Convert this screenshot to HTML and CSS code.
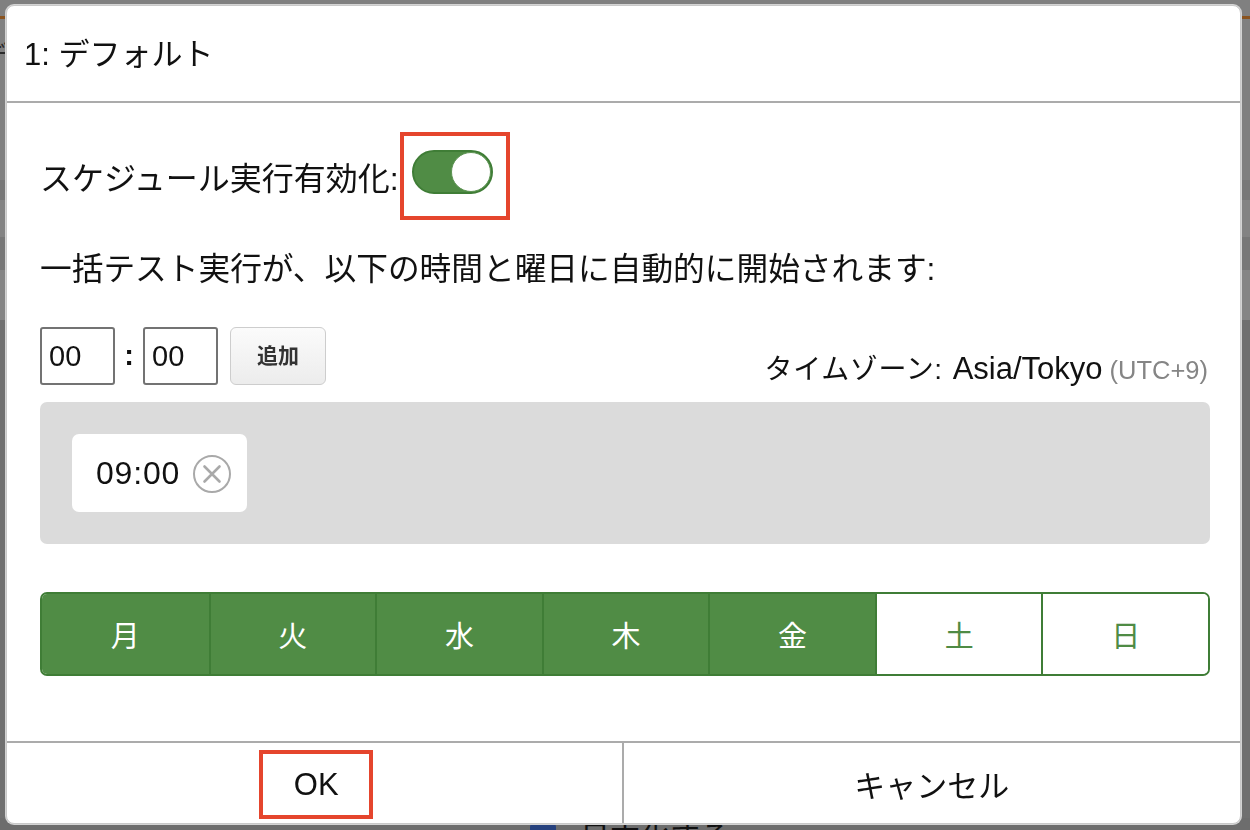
FILE: index.html
```html
<!DOCTYPE html>
<html lang="ja">
<head>
<meta charset="utf-8">
<title>スケジュール</title>
<link rel="stylesheet" href="styles.css">
</head>
<body>
<div class="page">
  <div class="page-top"></div>
  <div class="page-nav"><span class="page-frag">デ</span></div>
  <div class="page-band page-band-a"></div>
  <div class="page-band page-band-b"></div>
  <div class="page-band page-band-c"></div>
  <div class="page-band page-band-d"></div>
  <div class="page-rest"></div>
  <div class="page-footer">
    <span class="page-check"></span>
    <span class="page-label">日本化する</span>
  </div>
</div>

<div class="dialog">
  <div class="dialog-header">1: デフォルト</div>
  <div class="dialog-body">
    <div class="row-enable">
      <span class="label">スケジュール実行有効化:</span>
      <span class="highlight highlight-switch">
        <span class="switch"><span class="knob"></span></span>
      </span>
    </div>
    <div class="desc">一括テスト実行が、以下の時間と曜日に自動的に開始されます:</div>
    <div class="row-time">
      <input class="time-input" type="text" value="00">
      <span class="time-colon">:</span>
      <input class="time-input" type="text" value="00">
      <button class="btn-add" type="button">追加</button>
      <div class="timezone">
        <span class="tz-label">タイムゾーン:</span>
        <span class="tz-name">Asia/Tokyo</span>
        <span class="tz-offset">(UTC+9)</span>
      </div>
    </div>
    <div class="time-list">
      <div class="chip">
        <span class="chip-text">09:00</span>
        <svg class="chip-close" width="40" height="40" viewBox="0 0 40 40">
          <circle cx="20" cy="20" r="18" fill="none" stroke="#a9a9a9" stroke-width="2"/>
          <path d="M12.5 12.5 L27.5 27.5 M27.5 12.5 L12.5 27.5" stroke="#a9a9a9" stroke-width="2.6" stroke-linecap="round"/>
        </svg>
      </div>
    </div>
    <div class="weekdays">
      <div class="day on">月</div>
      <div class="day on">火</div>
      <div class="day on">水</div>
      <div class="day on">木</div>
      <div class="day on">金</div>
      <div class="day">土</div>
      <div class="day">日</div>
    </div>
  </div>
  <div class="dialog-footer">
    <div class="footer-cell footer-left">
      <span class="highlight highlight-ok">OK</span>
    </div>
    <div class="footer-cell">キャンセル</div>
  </div>
</div>
</body>
</html>
```

FILE: styles.css
```css
* { box-sizing: border-box; }

html, body {
  margin: 0;
  padding: 0;
  height: 100%;
}

body {
  font-family: "Liberation Sans", "Noto Sans CJK JP", sans-serif;
  background: #727272;
  color: #111;
  overflow: hidden;
}

/* background page (already dimmed) */
.page {
  height: 100vh;
  display: flex;
  flex-direction: column;
}
.page-top {
  height: 19px;
  background: #808080;
  border-bottom: 3px solid #8a531f;
  flex: none;
}
.page-nav {
  height: 161px;
  background: #808080;
  flex: none;
  overflow: hidden;
}
.page-frag {
  display: block;
  margin: 22px 0 0 -18px;
  font-size: 26px;
  line-height: 30px;
  color: #2a2a2a;
}
.page-band { flex: none; }
.page-band-a { height: 20px; background: #777; }
.page-band-b { height: 37px; background: #838383; }
.page-band-c { height: 33px; background: #777; }
.page-band-d { height: 50px; background: #858585; }
.page-rest { flex: 1; background: #707070; }
.page-footer {
  height: 12px;
  background: #6d6d6d;
  display: flex;
  align-items: flex-start;
  padding-left: 530px;
  gap: 24px;
  flex: none;
  overflow: hidden;
}
.page-check {
  width: 26px;
  height: 26px;
  margin-top: 3px;
  border-radius: 6px;
  background: #26417e;
}
.page-label {
  font-size: 30px;
  line-height: 30px;
  margin-top: 4px;
  color: #111;
}

/* dialog overlay */
.dialog {
  position: fixed;
  left: 6px;
  top: 5px;
  right: 9px;
  bottom: 6px;
  background: #fff;
  border: 1px solid #c9c9c9;
  box-shadow: 0 0 0 1px #d4d4d4;
  border-radius: 8px;
  display: flex;
  flex-direction: column;
  overflow: hidden;
}

.dialog-header {
  height: 97px;
  flex: none;
  border-bottom: 2px solid #ababab;
  padding-left: 17px;
  display: flex;
  align-items: center;
  font-size: 31px;
  padding-bottom: 4px;
}

.dialog-body {
  flex: 1;
  padding: 29px 30px 0 33px;
  display: flex;
  flex-direction: column;
}

.row-enable {
  display: flex;
  align-items: center;
  height: 88px;
}
.label {
  font-size: 32px;
}

.highlight {
  display: inline-block;
  border: 4px solid #e5452d;
}
.highlight-switch {
  width: 110px;
  height: 88px;
  margin-left: 1px;
  padding: 14px 0 0 8px;
}

.switch {
  display: block;
  position: relative;
  width: 81px;
  height: 44px;
  border-radius: 22px;
  background: #508c45;
  border: 2px solid #3f7d36;
}
.knob {
  position: absolute;
  right: 0;
  top: 0;
  width: 40px;
  height: 40px;
  border-radius: 50%;
  background: #fff;
  border: 1px solid #5c9352;
}

.desc {
  margin-top: 27px;
  font-size: 31.7px;
  line-height: 44px;
}

.row-time {
  margin-top: 36px;
  display: flex;
  align-items: center;
  height: 58px;
}
.time-input {
  width: 75px;
  height: 58px;
  border: 2px solid #737373;
  border-radius: 3px;
  font-family: "Liberation Sans", sans-serif;
  font-size: 29px;
  padding: 0 0 0 7px;
  color: #111;
  background: #fff;
  outline: none;
}
.time-colon {
  width: 28px;
  text-align: center;
  font-size: 29px;
  font-weight: bold;
  padding-bottom: 2px;
}
.btn-add {
  margin-left: 12px;
  width: 96px;
  height: 58px;
  border: 1px solid #cdcdcd;
  border-radius: 6px;
  background: linear-gradient(#fbfbfb, #ececec);
  font-family: "Noto Sans CJK JP", sans-serif;
  font-size: 21px;
  font-weight: bold;
  color: #333;
  padding: 0 0 4px;
}
.timezone {
  margin-left: auto;
  margin-top: 22px;
  margin-right: 2px;
  display: flex;
  align-items: baseline;
  white-space: nowrap;
}
.tz-label {
  font-size: 28px;
  letter-spacing: 0.6px;
  margin-right: 10px;
}
.tz-name {
  font-size: 31px;
}
.tz-offset {
  font-size: 25.5px;
  color: #858585;
  margin-left: 7px;
}

.time-list {
  margin-top: 17px;
  height: 142px;
  background: #dbdbdb;
  border-radius: 7px;
  padding: 32px;
  display: flex;
  align-items: flex-start;
}
.chip {
  width: 175px;
  height: 78px;
  background: #fff;
  border-radius: 7px;
  display: flex;
  align-items: center;
  padding-left: 24px;
}
.chip-text {
  font-size: 32px;
  letter-spacing: 0.8px;
}
.chip-close {
  margin-left: 12px;
  margin-top: 2px;
}

.weekdays {
  margin-top: 48px;
  height: 84px;
  display: grid;
  grid-template-columns: repeat(7, 1fr);
  border: 2px solid #3f7d36;
  border-radius: 7px;
  overflow: hidden;
}
.day {
  display: flex;
  align-items: center;
  justify-content: center;
  font-family: "Noto Sans CJK JP", sans-serif;
  font-size: 29px;
  color: #4f8b45;
  background: #fff;
  border-left: 2px solid #3f7d36;
}
.day:first-child { border-left: none; }
.day.on {
  background: #508c45;
  color: #fff;
}

.dialog-footer {
  flex: none;
  height: 82px;
  border-top: 2px solid #ababab;
  display: grid;
  grid-template-columns: 1fr 1fr;
}
.footer-cell {
  display: flex;
  align-items: center;
  justify-content: center;
  font-size: 31px;
}
.footer-left {
  border-right: 2px solid #ababab;
}
.highlight-ok {
  width: 114px;
  height: 69px;
  margin-top: 2px;
  margin-left: 4px;
  line-height: 61px;
  text-align: center;
  font-size: 31px;
}
```
